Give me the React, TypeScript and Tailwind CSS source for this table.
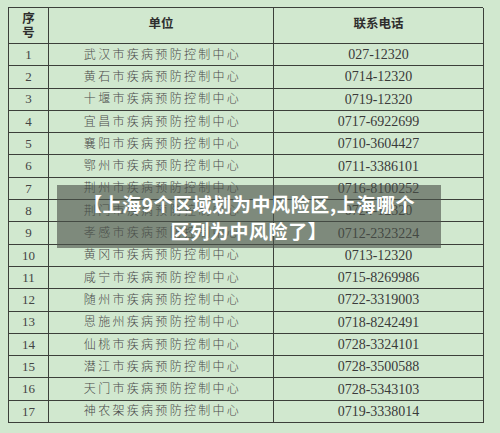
import React from "react";

const rows: [string, string, string][] = [
  ["1", "武汉市疾病预防控制中心", "027-12320"],
  ["2", "黄石市疾病预防控制中心", "0714-12320"],
  ["3", "十堰市疾病预防控制中心", "0719-12320"],
  ["4", "宜昌市疾病预防控制中心", "0717-6922699"],
  ["5", "襄阳市疾病预防控制中心", "0710-3604427"],
  ["6", "鄂州市疾病预防控制中心", "0711-3386101"],
  ["7", "荆州市疾病预防控制中心", "0716-8100252"],
  ["8", "荆门市疾病预防控制中心", "0724-12320"],
  ["9", "孝感市疾病预防控制中心", "0712-2323224"],
  ["10", "黄冈市疾病预防控制中心", "0713-12320"],
  ["11", "咸宁市疾病预防控制中心", "0715-8269986"],
  ["12", "随州市疾病预防控制中心", "0722-3319003"],
  ["13", "恩施州疾病预防控制中心", "0718-8242491"],
  ["14", "仙桃市疾病预防控制中心", "0728-3324101"],
  ["15", "潜江市疾病预防控制中心", "0728-3500588"],
  ["16", "天门市疾病预防控制中心", "0728-5343103"],
  ["17", "神农架疾病预防控制中心", "0719-3338014"],
];

const serif = "font-['Liberation_Serif','Noto_Sans_CJK_SC',serif]";

export default function App() {
  return (
    <div className="w-[500px] h-[433px] bg-[#d1e8cf] relative overflow-hidden">
      <div className="pt-[7px] pl-[8px]">
        <div
          className={`grid grid-cols-[40px_225px_210px] grid-rows-[36px_repeat(17,22.3px)] w-[475px] border-l border-t border-[#3c3f3a] text-[#3a3a3a] ${serif}`}
        >
          <div className="border-r border-b border-[#3c3f3a] flex items-center justify-center text-[12.5px] leading-[14px] font-bold text-center text-[#2e2e2e]">
            序<br />号
          </div>
          <div className="border-r border-b border-[#3c3f3a] flex items-center justify-center text-[12.5px] font-bold text-[#2e2e2e] pb-[2px]">
            单位
          </div>
          <div className="border-r border-b border-[#3c3f3a] flex items-center justify-center text-[12.5px] font-bold text-[#2e2e2e] pb-[2px]">
            联系电话
          </div>
          {rows.map(([n, u, p]) => (
            <React.Fragment key={n}>
              <div className="border-r border-b border-[#3c3f3a] flex items-center justify-center text-[13px] text-[#444]">
                {n}
              </div>
              <div className="border-r border-b border-[#3c3f3a] flex items-center justify-center pl-[3px] text-[12px] tracking-[2.3px] text-[#4a4a4a] font-light">
                {u}
              </div>
              <div className="border-r border-b border-[#3c3f3a] flex items-center justify-center text-[14px] text-[#3a3a3a]">
                {p}
              </div>
            </React.Fragment>
          ))}
        </div>
      </div>
      <div className="absolute left-[57px] top-[185px] w-[384px] h-[63px] bg-[rgba(75,80,72,0.62)] flex flex-col items-center justify-center font-['Noto_Sans_CJK_SC',sans-serif] font-bold text-white text-[19px] leading-[27px] tracking-[0.6px]">
        <span>【上海9个区域划为中风险区,上海哪个</span>
        <span>区列为中风险了】</span>
      </div>
    </div>
  );
}
